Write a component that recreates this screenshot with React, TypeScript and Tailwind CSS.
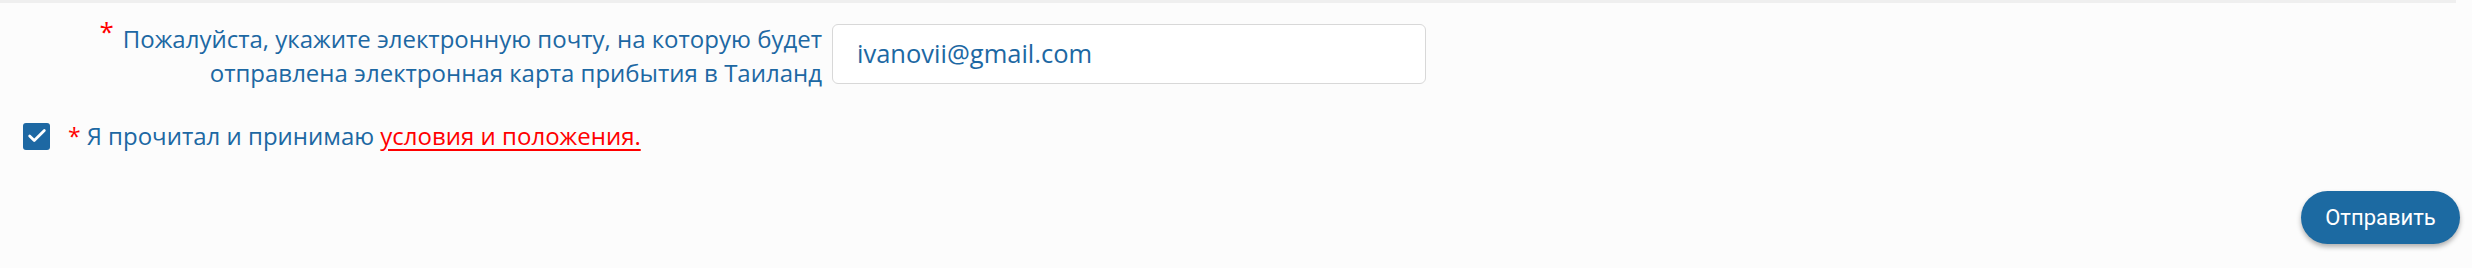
import { Check } from "lucide-react";

export default function App() {
  return (
    <div className="w-[2472px] h-[268px] bg-[#fcfcfc] overflow-hidden font-['Open_Sans',sans-serif]">
      <div className="h-[3px] w-[2456px] bg-[#efefef]" />

      {/* email field */}
      <div className="flex items-center mt-[14px]">
        <div className="w-[822px] flex justify-end pt-[5px]">
          <div className="flex items-start">
            <span className="text-[#ff0000] text-[26px] leading-[26px] mr-[9px] mt-[-4px]">*</span>
            <p className="text-right text-[#1d68a3] text-[24px] leading-[34px]">
              Пожалуйста, укажите электронную почту, на которую будет
              <br />
              отправлена электронная карта прибытия в Таиланд
            </p>
          </div>
        </div>
        <div className="ml-[10px] w-[594px] h-[60px] rounded-[6px] border border-[#d8d8d8] bg-white flex items-center px-[24px]">
          <span className="text-[#1d68a3] text-[25.5px]">ivanovii@gmail.com</span>
        </div>
      </div>

      {/* terms */}
      <div className="flex items-center mt-[28px] pl-[23px]">
        <div className="w-[27px] h-[27px] rounded-[3px] bg-[#1d68a3] flex items-center justify-center">
          <Check className="text-white" size={22} strokeWidth={3} />
        </div>
        <span className="ml-[18px] text-[#ff0000] text-[23px] leading-none">*</span>
        <span className="ml-[6px] text-[#1d68a3] text-[24px]">
          Я прочитал и принимаю{" "}
          <a className="text-[#ff0000] underline underline-offset-[4px]" href="#">
            условия и положения.
          </a>
        </span>
      </div>

      <div className="flex justify-end pr-[12px] mt-[37px]">
        <button className="w-[159px] h-[53px] rounded-full bg-[#1c6aa2] text-white text-[22px] font-['Roboto',sans-serif] shadow-[0_3px_5px_rgba(0,0,0,0.3)]">
          Отправить
        </button>
      </div>
    </div>
  );
}
